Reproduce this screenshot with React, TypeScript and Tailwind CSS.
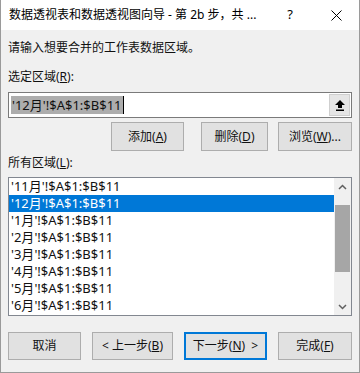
import React from 'react';

const font = { fontFamily: '"Noto Sans", "Noto Sans CJK SC", sans-serif' };

const ranges = ['11月', '12月', '1月', '2月', '3月', '4月', '5月', '6月'];

function Btn({ children, w, primary }: { children: React.ReactNode; w: string; primary?: boolean }) {
  return (
    <div
      className={`${w} h-full flex items-center justify-center bg-[#e1e1e1] text-[12px] text-[#111] ${
        primary ? 'border-2 border-[#0078d7]' : 'border border-[#adadad]'
      }`}
    >
      {children}
    </div>
  );
}

function UpIcon() {
  return (
    <svg width="10" height="11" viewBox="0 0 10 11">
      <path d="M5 0 L10 5 L7 5 L7 8 L3 8 L3 5 L0 5 Z" fill="#000" />
      <rect x="1" y="9.5" width="8" height="1.5" fill="#000" />
    </svg>
  );
}

function Chevron({ down }: { down?: boolean }) {
  return (
    <svg width="9" height="6" viewBox="0 0 9 6">
      <path d={down ? 'M1 1 L4.5 4.5 L8 1' : 'M1 5 L4.5 1.5 L8 5'} stroke="#606060" strokeWidth="1.5" fill="none" />
    </svg>
  );
}

export default function App() {
  return (
    <div className="w-[360px] h-[373px] bg-[#f0f0f0] border-x border-b border-[#9a9a9a] flex flex-col" style={font}>
      {/* Title bar */}
      <div className="h-[30px] bg-white flex items-center shrink-0">
        <span className="pl-[8px] text-[12px] text-black flex-1 whitespace-nowrap">
          数据透视表和数据透视图向导 - 第 2b 步，共 ...
        </span>
        <span className="w-[46px] text-center text-[13px] text-black">?</span>
        <span className="w-[46px] flex justify-center">
          <svg width="11" height="11" viewBox="0 0 11 11">
            <path d="M0.5 0.5 L10.5 10.5 M10.5 0.5 L0.5 10.5" stroke="#000" strokeWidth="1" />
          </svg>
        </span>
      </div>

      {/* Body */}
      <div className="px-[7px] flex flex-col text-[12px] text-[#111]">
        <div className="mt-[10px] h-[16px] leading-[16px]">请输入想要合并的工作表数据区域。</div>

        <div className="mt-[13px] h-[16px] leading-[16px]">
          选定区域(<span className="underline">R</span>):
        </div>

        <div className="mt-[7px] h-[26px] bg-white border border-[#7a7a7a] flex items-center pl-[2px] pr-[1px]">
          <span className="bg-[#adadad] text-[13px] leading-[18px] px-[1px]">'12月'!$A$1:$B$11</span>
          <span className="w-px h-[18px] bg-black" />
          <div className="flex-1" />
          <div className="w-[21px] h-[22px] bg-[#e5e5e5] border border-[#cfcfcf] flex items-center justify-center">
            <UpIcon />
          </div>
        </div>

        <div className="mt-[4px] h-[29px] flex justify-end">
          <Btn w="w-[73px]">
            添加(<span className="underline">A</span>)
          </Btn>
          <div className="w-[17px]" />
          <Btn w="w-[67px]">
            删除(<span className="underline">D</span>)
          </Btn>
          <div className="w-[10px]" />
          <Btn w="w-[74px]">
            浏览(<span className="underline">W</span>)...
          </Btn>
        </div>

        <div className="mt-[4px] h-[16px] leading-[16px]">
          所有区域(<span className="underline">L</span>):
        </div>

        {/* List */}
        <div className="mt-[6px] h-[139px] bg-white border border-[#828790] flex">
          <div className="flex-1 flex flex-col">
            {ranges.map((m) => (
              <div
                key={m}
                className={`h-[17px] leading-[17px] pl-[2px] text-[13px] ${
                  m === '12月' ? 'bg-[#0078d7] text-white' : 'text-[#111]'
                }`}
              >
                '{m}'!$A$1:$B$11
              </div>
            ))}
          </div>
          <div className="w-[17px] bg-[#f0f0f0] flex flex-col items-center">
            <div className="h-[17px] flex items-center justify-center">
              <Chevron />
            </div>
            <div className="w-[15px] h-[67px] bg-[#a6a6a6] mt-[10px]" />
            <div className="flex-1" />
            <div className="h-[17px] flex items-center justify-center">
              <Chevron down />
            </div>
          </div>
        </div>

        {/* Footer buttons */}
        <div className="mt-[16px] h-[28px] flex justify-between">
          <Btn w="w-[73px]">取消</Btn>
          <Btn w="w-[81px]">
            &lt; 上一步(<span className="underline">B</span>)
          </Btn>
          <Btn w="w-[83px]" primary>
            下一步(<span className="underline">N</span>)&nbsp;&nbsp;&gt;
          </Btn>
          <Btn w="w-[74px]">
            完成(<span className="underline">F</span>)
          </Btn>
        </div>
      </div>
    </div>
  );
}
